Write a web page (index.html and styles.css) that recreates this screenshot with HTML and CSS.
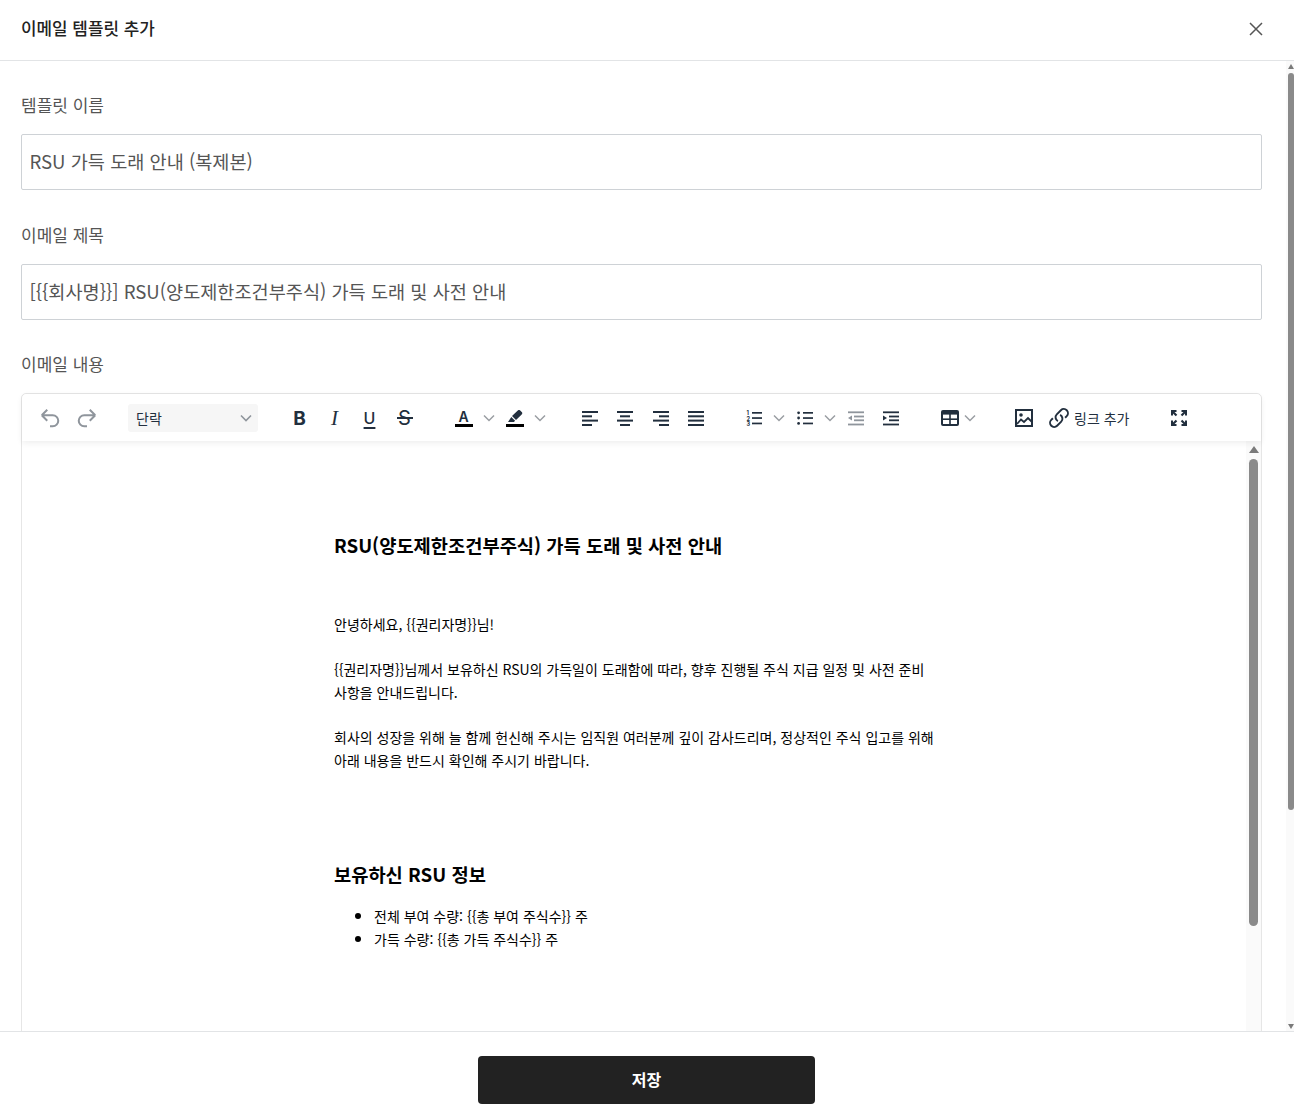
FILE: index.html
```html
<!DOCTYPE html>
<html lang="ko">
<head>
    <meta charset="UTF-8">
    <meta name="viewport" content="width=device-width, initial-scale=1.0">
    <title>이메일 템플릿 추가</title>
    <link rel="stylesheet" href="styles.css">
</head>
<body>
<div class="modal">
    <div class="modal-header">
        <div class="modal-title">이메일 템플릿 추가</div>
        <svg class="close-icon" width="14" height="14" viewBox="0 0 14 14"><path d="M1 1l12 12M13 1L1 13" stroke="#555" stroke-width="1.5" fill="none"/></svg>
    </div>

    <div class="modal-body">
        <div class="form">
            <div class="field-label">템플릿 이름</div>
            <div class="text-input">RSU 가득 도래 안내 (복제본)</div>
            <div class="field-label">이메일 제목</div>
            <div class="text-input">[{{회사명}}] RSU(양도제한조건부주식) 가득 도래 및 사전 안내</div>
            <div class="field-label">이메일 내용</div>

            <div class="editor">
                <div class="toolbar">
                    <!-- history -->
                    <span class="tool wide"><svg width="22" height="22" viewBox="0 0 24 24" fill="none" stroke="#8f959c" stroke-width="2.2"><path d="M9 15L3 9m0 0l6-6M3 9h12a6 6 0 0 1 0 12h-3"/></svg></span>
                    <span class="tool wide"><svg width="22" height="22" viewBox="0 0 24 24" fill="none" stroke="#8f959c" stroke-width="2.2"><path d="M15 15l6-6m0 0l-6-6m6 6H9a6 6 0 0 0 0 12h3"/></svg></span>

                    <div class="block-select">
                        <span>단락</span>
                        <svg width="16" height="16" viewBox="0 0 16 16" fill="none" stroke="#8f959c" stroke-width="1.6"><path d="M3 5.5l5 5 5-5"/></svg>
                    </div>

                    <!-- text style -->
                    <span class="tool group-start fmt fmt-bold">B</span>
                    <span class="tool fmt fmt-italic">I</span>
                    <span class="tool fmt fmt-underline">U</span>
                    <span class="tool fmt fmt-strike">S</span>

                    <span class="tool group-start color-tool"><span class="color-letter">A</span><i class="color-bar"></i></span>
                    <span class="arrow"><svg width="16" height="16" viewBox="0 0 16 16" fill="none" stroke="#9a9ea3" stroke-width="1.5"><path d="M3 5.5l5 5 5-5"/></svg></span>
                    <span class="tool color-tool"><svg width="16" height="13" viewBox="0 0 16 13"><path d="M10.8.5a1.7 1.7 0 0 1 2.4 0l1.5 1.5a1.7 1.7 0 0 1 0 2.4L9 10 5 6zM4.3 6.9l3.8 3.8-1.2 1.3H1z" fill="#222f3e"/></svg><i class="color-bar"></i></span>
                    <span class="arrow"><svg width="16" height="16" viewBox="0 0 16 16" fill="none" stroke="#9a9ea3" stroke-width="1.5"><path d="M3 5.5l5 5 5-5"/></svg></span>

                    <!-- align -->
                    <span class="tool align-tool group-start"><svg width="16" height="16" viewBox="0 0 16 16" fill="#222f3e"><rect y="1" width="16" height="2"/><rect y="5.3" width="10" height="2"/><rect y="9.6" width="16" height="2"/><rect y="14" width="10" height="2"/></svg></span>
                    <span class="tool align-tool"><svg width="16" height="16" viewBox="0 0 16 16" fill="#222f3e"><rect y="1" width="16" height="2"/><rect x="3" y="5.3" width="10" height="2"/><rect y="9.6" width="16" height="2"/><rect x="3" y="14" width="10" height="2"/></svg></span>
                    <span class="tool align-tool"><svg width="16" height="16" viewBox="0 0 16 16" fill="#222f3e"><rect y="1" width="16" height="2"/><rect x="6" y="5.3" width="10" height="2"/><rect y="9.6" width="16" height="2"/><rect x="6" y="14" width="10" height="2"/></svg></span>
                    <span class="tool align-tool"><svg width="16" height="16" viewBox="0 0 16 16" fill="#222f3e"><rect y="1" width="16" height="2"/><rect y="5.3" width="16" height="2"/><rect y="9.6" width="16" height="2"/><rect y="14" width="16" height="2"/></svg></span>

                    <!-- lists -->
                    <span class="tool group-lists"><svg width="16" height="16" viewBox="0 0 16 16" fill="#222f3e"><text class="list-number" x="0.5" y="5">1</text><text class="list-number" x="0.5" y="10.5">2</text><text class="list-number" x="0.5" y="16">3</text><rect x="6" y="2" width="10" height="1.7"/><rect x="6" y="7.2" width="10" height="1.7"/><rect x="6" y="12.6" width="10" height="1.7"/></svg></span>
                    <span class="arrow"><svg width="16" height="16" viewBox="0 0 16 16" fill="none" stroke="#9a9ea3" stroke-width="1.5"><path d="M3 5.5l5 5 5-5"/></svg></span>
                    <span class="tool"><svg width="16" height="16" viewBox="0 0 16 16" fill="#222f3e"><circle cx="1.6" cy="2.8" r="1.4"/><circle cx="1.6" cy="8" r="1.4"/><circle cx="1.6" cy="13.4" r="1.4"/><rect x="6" y="2" width="10" height="1.7"/><rect x="6" y="7.2" width="10" height="1.7"/><rect x="6" y="12.6" width="10" height="1.7"/></svg></span>
                    <span class="arrow"><svg width="16" height="16" viewBox="0 0 16 16" fill="none" stroke="#9a9ea3" stroke-width="1.5"><path d="M3 5.5l5 5 5-5"/></svg></span>
                    <span class="tool"><svg width="16" height="16" viewBox="0 0 16 16" fill="#8f959c"><rect x="0" y="1.4" width="16" height="1.8"/><rect x="6" y="5.6" width="10" height="1.8"/><rect x="6" y="9.4" width="10" height="1.8"/><rect x="0" y="13.6" width="16" height="1.8"/><path d="M4 5.5v5L0 8z"/></svg></span>
                    <span class="tool"><svg width="16" height="16" viewBox="0 0 16 16" fill="#222f3e"><rect x="0" y="1.4" width="16" height="1.8"/><rect x="6" y="5.6" width="10" height="1.8"/><rect x="6" y="9.4" width="10" height="1.8"/><rect x="0" y="13.6" width="16" height="1.8"/><path d="M0 5.5v5L4 8z"/></svg></span>

                    <!-- insert -->
                    <span class="tool-table"><svg width="18" height="16" viewBox="0 0 18 16"><rect width="18" height="16" rx="2" fill="#222f3e"/><rect x="2" y="4.6" width="6.2" height="3.8" fill="#fff"/><rect x="9.8" y="4.6" width="6.2" height="3.8" fill="#fff"/><rect x="2" y="10" width="6.2" height="4" fill="#fff"/><rect x="9.8" y="10" width="6.2" height="4" fill="#fff"/></svg></span>
                    <span class="arrow"><svg width="16" height="16" viewBox="0 0 16 16" fill="none" stroke="#9a9ea3" stroke-width="1.5"><path d="M3 5.5l5 5 5-5"/></svg></span>
                    <span class="tool tool-image"><svg width="18" height="18" viewBox="0 0 18 18" fill="none"><rect x="1" y="1" width="16" height="16" stroke="#222f3e" stroke-width="2"/><circle cx="6" cy="6" r="1.8" fill="#222f3e"/><path d="M2 15l4-4.5 3 2.5 4-4 3.5 3.5" stroke="#222f3e" stroke-width="1.8"/></svg></span>
                    <span class="tool"><svg width="22" height="22" viewBox="0 0 24 24" fill="none" stroke="#222f3e" stroke-width="2.1"><path d="M13.19 8.688a4.5 4.5 0 0 1 1.242 7.244l-4.5 4.5a4.5 4.5 0 0 1-6.364-6.364l1.757-1.757m13.35-.622l1.757-1.757a4.5 4.5 0 0 0-6.364-6.364l-4.5 4.5a4.5 4.5 0 0 0 1.242 7.244"/></svg></span>
                    <span class="link-label">링크 추가</span>
                    <span class="tool tool-full"><svg width="16" height="16" viewBox="0 0 16 16" fill="none" stroke="#222f3e"><path stroke-width="2" d="M1 5.5V1h4.5M15 5.5V1h-4.5M1 10.5V15h4.5M15 10.5V15h-4.5"/><path stroke-width="2.2" d="M1.5 1.5l4 4M14.5 1.5l-4 4M1.5 14.5l4-4M14.5 14.5l-4-4"/></svg></span>
                </div>

                <div class="editor-main">
                    <div class="editor-content">
                        <div class="doc">
                            <h2 class="doc-title">RSU(양도제한조건부주식) 가득 도래 및 사전 안내</h2>
                            <p>안녕하세요, {{권리자명}}님!</p>
                            <p>{{권리자명}}님께서 보유하신 RSU의 가득일이 도래함에 따라, 향후 진행될 주식 지급 일정 및 사전 준비 사항을 안내드립니다.</p>
                            <p>회사의 성장을 위해 늘 함께 헌신해 주시는 임직원 여러분께 깊이 감사드리며, 정상적인 주식 입고를 위해 아래 내용을 반드시 확인해 주시기 바랍니다.</p>
                            <h3 class="doc-subtitle">보유하신 RSU 정보</h3>
                            <ul>
                                <li>전체 부여 수량: {{총 부여 주식수}} 주</li>
                                <li>가득 수량: {{총 가득 주식수}} 주</li>
                            </ul>
                        </div>
                    </div>
                    <div class="inner-scrollbar">
                        <i class="arrow-up"></i>
                        <div class="inner-thumb"></div>
                    </div>
                </div>
            </div>
        </div>

        <div class="page-scrollbar">
            <i class="arrow-up small"></i>
            <div class="page-thumb"></div>
            <i class="arrow-down small"></i>
        </div>
    </div>

    <div class="modal-footer">
        <button class="save-button">저장</button>
    </div>
</div>
</body>
</html>
```

FILE: styles.css
```css
/* Basic layout */
* {
    box-sizing: border-box;
}
body {
    margin: 0;
    background: #fff;
    font-family: "Noto Sans CJK KR", "Noto Sans", sans-serif;
    color: #222;
}
.modal {
    display: flex;
    flex-direction: column;
    height: 1118px;
    overflow: hidden;
}

/* Header */
.modal-header {
    display: flex;
    align-items: center;
    justify-content: space-between;
    height: 61px;
    flex-shrink: 0;
    padding: 0 31px 3px 21px;
    border-bottom: 1px solid #e2e4e6;
}
.modal-title {
    margin-bottom: 2px;
    font-size: 16.9px;
    font-weight: 500;
    color: #222;
}

/* Body and form */
.modal-body {
    display: flex;
    flex: 1;
    min-height: 0;
}
.form {
    flex: 1;
    min-width: 0;
    padding: 0 24px 0 21px;
    overflow: hidden;
}
.field-label {
    height: 30px;
    margin-top: 29.25px;
    font-size: 17px;
    line-height: 29.5px;
    color: #555;
}
.text-input {
    height: 56px;
    margin-top: 14px;
    padding: 0 7.5px;
    border: 1px solid #ced2d6;
    border-radius: 2px;
    font-size: 18.6px;
    line-height: 52px;
    color: #555;
}

/* Editor */
.editor {
    height: 720px;
    margin-top: 14px;
    display: flex;
    flex-direction: column;
    border: 1px solid #e6e6e6;
    border-radius: 5px 5px 0 0;
}
.toolbar {
    position: relative;
    z-index: 1;
    display: flex;
    align-items: center;
    height: 47px;
    flex-shrink: 0;
    padding: 2px 0 0 10px;
    background: #fff;
    border-radius: 5px 5px 0 0;
    box-shadow: 0 2px 6px rgba(0, 0, 0, 0.07);
}
.tool {
    display: flex;
    align-items: center;
    justify-content: center;
    width: 35px;
    height: 35px;
    flex-shrink: 0;
}
.tool.wide {
    width: 36.5px;
}
.group-start {
    margin-left: 24px;
}
.group-lists {
    margin-left: 22px;
}
.align-tool {
    width: 35.5px;
}
.arrow {
    display: flex;
    align-items: center;
    justify-content: center;
    width: 16px;
    height: 35px;
}
.block-select {
    display: flex;
    align-items: center;
    justify-content: space-between;
    width: 130px;
    height: 28px;
    margin-left: 23px;
    padding: 0 4px 0 8px;
    border-radius: 3px;
    background: #f6f6f6;
    font-size: 14px;
    color: #222f3e;
}
.fmt {
    font-family: Inter, sans-serif;
    color: #222f3e;
}
.fmt-bold {
    font-size: 19px;
    font-weight: 700;
}
.fmt-italic {
    font-family: "Liberation Serif", serif;
    font-style: italic;
    font-size: 21px;
}
.fmt-underline {
    font-size: 16px;
    font-weight: 500;
    text-decoration: underline;
    text-underline-offset: 3px;
    text-decoration-thickness: 2px;
}
.fmt-strike {
    position: relative;
    font-size: 20px;
    font-weight: 400;
}
.fmt-strike::after {
    content: "";
    position: absolute;
    left: 9.5px;
    top: 16.5px;
    width: 16px;
    height: 1.5px;
    background: #222f3e;
}
.list-number {
    font-family: Inter, sans-serif;
    font-size: 5.5px;
    font-weight: 700;
}
.color-tool {
    flex-direction: column;
    gap: 1px;
}
.color-letter {
    font-family: Inter, sans-serif;
    font-size: 14px;
    font-weight: 600;
    line-height: 13px;
    color: #222f3e;
}
.color-bar {
    display: block;
    width: 18px;
    height: 3px;
    background: #000;
}
.tool-table {
    display: flex;
    align-items: center;
    justify-content: center;
    width: 24px;
    height: 35px;
    margin-left: 30px;
}
.tool-image {
    margin-left: 28px;
}
.link-label {
    margin-left: -2px;
    font-size: 14px;
    color: #222f3e;
    white-space: nowrap;
}
.tool-full {
    margin-left: 32px;
}

/* Editor content */
.editor-main {
    display: flex;
    flex: 1;
    min-height: 0;
}
.editor-content {
    flex: 1;
    min-width: 0;
}
.doc {
    width: 600px;
    margin: 0 auto;
    padding-top: 88px;
    font-size: 14px;
    line-height: 23px;
    color: #000;
}
.doc p {
    margin: 0 0 22px;
}
.doc-title {
    margin: 0 0 52px;
    font-size: 18.72px;
    font-weight: 700;
    line-height: 32px;
}
.doc-subtitle {
    margin: 86px 0 0;
    font-size: 18.72px;
    font-weight: 700;
    line-height: 32px;
}
.doc ul {
    margin: 15px 0 0;
    padding-left: 40px;
    list-style: none;
}
.doc li {
    position: relative;
}
.doc li::before {
    content: "";
    position: absolute;
    left: -19px;
    top: 8px;
    width: 6px;
    height: 6px;
    border-radius: 50%;
    background: #000;
}

/* Scrollbars */
.inner-scrollbar {
    display: flex;
    flex-direction: column;
    align-items: center;
    width: 15px;
    flex-shrink: 0;
    padding-top: 5px;
    background: #fafafa;
}
.inner-thumb {
    width: 9px;
    height: 467px;
    margin-top: 6px;
    border-radius: 5px;
    background: #8a8a8a;
}
.page-scrollbar {
    display: flex;
    flex-direction: column;
    align-items: flex-end;
    width: 8px;
    flex-shrink: 0;
    background: #fafafa;
}
.page-thumb {
    width: 6px;
    height: 737px;
    margin-top: 4px;
    border-radius: 3px;
    background: #8a8a8a;
}
.arrow-up {
    display: block;
    width: 0;
    height: 0;
    border-left: 5px solid transparent;
    border-right: 5px solid transparent;
    border-bottom: 7px solid #7a7a7a;
}
.arrow-up.small {
    margin-top: 3px;
    border-left-width: 3px;
    border-right-width: 3px;
    border-bottom-width: 5px;
}
.arrow-down {
    display: block;
    width: 0;
    height: 0;
    border-left: 3px solid transparent;
    border-right: 3px solid transparent;
    border-top: 5px solid #7a7a7a;
    margin-top: auto;
    margin-bottom: 2px;
}

/* Footer */
.modal-footer {
    display: flex;
    justify-content: center;
    height: 87px;
    flex-shrink: 0;
    padding: 24px 1px 0 0;
    border-top: 1px solid #e2e4e6;
    background: #fff;
}
.save-button {
    width: 337px;
    height: 48px;
    padding: 0 0 3px;
    border: none;
    border-radius: 4px;
    background: #222;
    color: #fff;
    font-family: inherit;
    font-size: 16px;
    font-weight: 700;
}
```
